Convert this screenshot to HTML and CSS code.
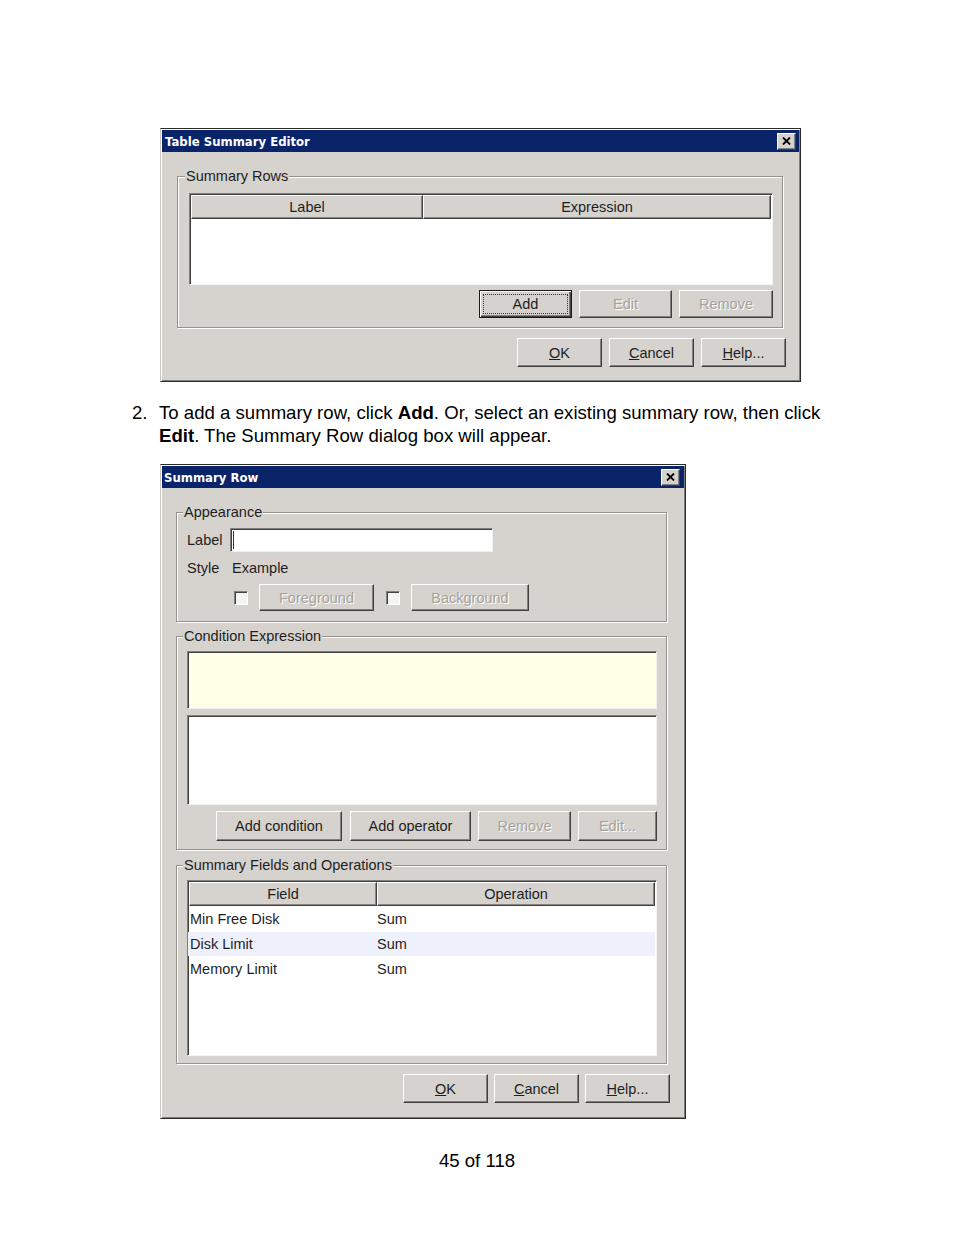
FILE: index.html
```html
<!DOCTYPE html>
<html lang="en">
<head>
    <meta charset="UTF-8">
    <title>Table Summary Editor - Summary Row</title>
    <link rel="stylesheet" href="styles.css">
</head>
<body>
    <div class="page">

        <!-- Table Summary Editor dialog -->
        <div class="dialog dlg-editor">
            <div class="titlebar">
                <span class="title">Table Summary Editor</span>
                <span class="close-btn"><svg width="9" height="8" viewBox="0 0 9 8"><path d="M1 0.5 L8 7.5 M8 0.5 L1 7.5" stroke="#000" stroke-width="1.8"/></svg></span>
            </div>
            <div class="dlg-body">
                <fieldset class="group">
                    <legend>Summary Rows</legend>
                    <div class="grid grid-rows">
                        <div class="grid-head">
                            <div class="th th-label">Label</div>
                            <div class="th th-fill">Expression</div>
                        </div>
                    </div>
                    <div class="btn-row">
                        <button class="btn btn-default btn-93"><span class="focus">Add</span></button>
                        <button class="btn btn-93 is-disabled">Edit</button>
                        <button class="btn btn-94 is-disabled">Remove</button>
                    </div>
                </fieldset>
                <div class="actions">
                    <button class="btn btn-act"><u>O</u>K</button>
                    <button class="btn btn-act"><u>C</u>ancel</button>
                    <button class="btn btn-act"><u>H</u>elp...</button>
                </div>
            </div>
        </div>

        <p class="step">
            <span class="step-num">2.</span>
            <span class="step-text">To add a summary row, click <b>Add</b>. Or, select an existing summary row, then click <b>Edit</b>. The Summary Row dialog box will appear.</span>
        </p>

        <!-- Summary Row dialog -->
        <div class="dialog dlg-row">
            <div class="titlebar">
                <span class="title">Summary Row</span>
                <span class="close-btn"><svg width="9" height="8" viewBox="0 0 9 8"><path d="M1 0.5 L8 7.5 M8 0.5 L1 7.5" stroke="#000" stroke-width="1.8"/></svg></span>
            </div>
            <div class="dlg-body">
                <fieldset class="group grp-tight">
                    <legend>Appearance</legend>
                    <div class="field-row">
                        <span class="field-label">Label</span>
                        <span class="text-input"><span class="caret"></span></span>
                    </div>
                    <div class="style-row">
                        <span class="style-label">Style</span>
                        <span>Example</span>
                    </div>
                    <div class="check-row">
                        <span class="checkbox"></span>
                        <button class="btn btn-fg is-disabled">Foreground</button>
                        <span class="checkbox"></span>
                        <button class="btn btn-bg is-disabled">Background</button>
                    </div>
                </fieldset>

                <fieldset class="group grp-tight grp-cond">
                    <legend>Condition Expression</legend>
                    <div class="well well-yellow"></div>
                    <div class="well well-white"></div>
                    <div class="btn-row btn-row-cond">
                        <button class="btn btn-cond btn-addcond">Add condition</button>
                        <button class="btn btn-cond btn-addop">Add operator</button>
                        <button class="btn btn-cond btn-93 is-disabled">Remove</button>
                        <button class="btn btn-cond btn-edit is-disabled">Edit...</button>
                    </div>
                </fieldset>

                <fieldset class="group grp-tight grp-fields">
                    <legend>Summary Fields and Operations</legend>
                    <div class="grid grid-fields">
                        <div class="grid-head">
                            <div class="th th-field">Field</div>
                            <div class="th th-fill">Operation</div>
                        </div>
                        <div class="tr"><span class="td td-field">Min Free Disk</span><span class="td">Sum</span></div>
                        <div class="tr tr-alt"><span class="td td-field">Disk Limit</span><span class="td">Sum</span></div>
                        <div class="tr"><span class="td td-field">Memory Limit</span><span class="td">Sum</span></div>
                    </div>
                </fieldset>

                <div class="actions">
                    <button class="btn btn-act"><u>O</u>K</button>
                    <button class="btn btn-act"><u>C</u>ancel</button>
                    <button class="btn btn-act"><u>H</u>elp...</button>
                </div>
            </div>
        </div>

        <p class="page-num">45 of 118</p>
    </div>
</body>
</html>
```

FILE: styles.css
```css
body {
    margin: 0;
    padding: 0;
    background-color: #fff;
    font-family: "Liberation Sans", Arial, sans-serif;
    color: #000;
}
.page {
    width: 954px;
    padding-top: 128px;
}

/* dialog frame */
.dialog {
    box-sizing: border-box;
    margin-left: 160px;
    background-color: #d6d3ce;
    border: 1px solid;
    border-color: #2a2a2a #2a2a2a #2a2a2a #c9c6c1;
    padding: 1px;
    box-shadow: inset 1px 1px 0 #fff, inset -1px -1px 0 #808080;
    font-size: 14.5px;
    color: #1e1e1e;
}
.dlg-editor {
    width: 641px;
}
.dlg-row {
    width: 526px;
}
.titlebar {
    height: 22px;
    background-color: #0a246a;
    display: flex;
    align-items: center;
    justify-content: space-between;
    padding: 0 3px 0 3px;
}
.dlg-row .titlebar {
    padding: 0 4px 0 2px;
}
.title {
    font-family: "DejaVu Sans", Verdana, sans-serif;
    font-weight: bold;
    font-size: 11.7px;
    color: #fff;
    padding-top: 1px;
}
.close-btn {
    box-sizing: border-box;
    width: 19px;
    height: 17px;
    background-color: #d6d3ce;
    border: 1px solid;
    border-color: #fff #404040 #404040 #fff;
    box-shadow: inset -1px -1px 0 #808080;
    display: flex;
    align-items: center;
    justify-content: center;
}
.dlg-body {
    padding: 16px 16px 13px 15px;
}
.dlg-row .dlg-body {
    padding: 16px 17px 14px 14px;
}

/* etched group box */
.group {
    margin: 0;
    min-width: 0;
    border: 1px solid #95928d;
    box-shadow: inset 1px 1px 0 #fff, 1px 1px 0 #fff;
    padding: 9px 9px 9px 11px;
}
.group legend {
    margin-left: -4px;
    padding: 1px 1px 0 1px;
    font-size: 14.5px;
    line-height: 15px;
    background-color: #d6d3ce;
}
.grp-tight {
    padding: 8px 9px 10px 10px;
}
.grp-cond {
    margin-top: 6px;
    padding: 7px 9px 8px 10px;
}
.grp-fields {
    margin-top: 7px;
    padding: 7px 9px 7px 10px;
}

/* tables */
.grid {
    box-sizing: border-box;
    background-color: #fff;
    border: 1px solid;
    border-color: #808080 #f4f4f4 #f4f4f4 #808080;
    box-shadow: inset 1px 1px 0 #404040;
    display: flex;
    flex-direction: column;
}
.grid-rows {
    height: 92px;
}
.grid-fields {
    height: 176px;
}
.grid-head {
    display: flex;
    padding: 1px 1px 0 1px;
    height: 24px;
    flex: none;
}
.th {
    box-sizing: border-box;
    height: 24px;
    line-height: 22px;
    text-align: center;
    background-color: #d6d3ce;
    border: 1px solid;
    border-color: #fff #404040 #404040 #fff;
    box-shadow: inset -1px -1px 0 #8a8782;
}
.th-label {
    width: 232px;
}
.th-field {
    width: 188px;
}
.th-fill {
    flex: 1;
}
.tr {
    display: flex;
    align-items: center;
    height: 24px;
    padding-left: 2px;
    margin-top: 1px;
}
.tr-alt {
    background-color: #eef0fc;
    margin-right: 1px;
}
.td-field {
    width: 187px;
}

/* buttons */
.btn {
    box-sizing: border-box;
    height: 28px;
    padding: 0;
    background-color: #d6d3ce;
    border: 1px solid;
    border-color: #fff #404040 #404040 #fff;
    box-shadow: inset -1px -1px 0 #808080;
    font-family: "Liberation Sans", Arial, sans-serif;
    font-size: 14.5px;
    color: #1e1e1e;
}
.btn.is-disabled {
    color: #a5a29d;
    text-shadow: 1px 1px 0 #fff;
}
.btn-default {
    display: flex;
    padding: 3px;
    border-color: #1a1a1a;
    box-shadow: inset 1px 1px 0 #fff, inset -1px -1px 0 #404040, inset -2px -2px 0 #808080;
}
.focus {
    flex: 1;
    display: flex;
    align-items: center;
    justify-content: center;
    border: 1px dotted #333;
}
.btn-93 { width: 93px; }
.btn-94 { width: 94px; }
.btn-row {
    display: flex;
    justify-content: flex-end;
    gap: 7px;
    margin-top: 5px;
}
.actions {
    display: flex;
    justify-content: flex-end;
    gap: 7px;
    margin-top: 10px;
    margin-right: -3px;
}
.dlg-row .actions {
    gap: 6px;
}
.btn-act {
    width: 85px;
    height: 29px;
}

/* summary row form */
.field-row {
    display: flex;
    align-items: center;
    height: 24px;
}
.field-label {
    width: 43px;
}
.text-input {
    box-sizing: border-box;
    width: 263px;
    height: 24px;
    background-color: #fff;
    border: 1px solid;
    border-color: #808080 #f0f0f0 #f0f0f0 #808080;
    box-shadow: inset 1px 1px 0 #404040;
    display: flex;
    align-items: center;
    padding-left: 2px;
}
.caret {
    width: 1px;
    height: 18px;
    background-color: #333;
}
.style-row {
    display: flex;
    height: 20px;
    line-height: 20px;
    margin-top: 6px;
}
.style-label {
    width: 45px;
}
.check-row {
    display: flex;
    align-items: center;
    height: 27px;
    margin-top: 6px;
    padding-left: 47px;
}
.checkbox {
    box-sizing: border-box;
    width: 14px;
    height: 14px;
    background-color: #f4f4f4;
    border: 1px solid;
    border-color: #808080 #fff #fff #808080;
    box-shadow: inset 1px 1px 0 #404040;
}
.btn-fg {
    width: 115px;
    height: 27px;
    margin: 0 12px 0 11px;
}
.btn-bg {
    width: 118px;
    height: 27px;
    margin-left: 11px;
}

/* condition expression */
.well {
    box-sizing: border-box;
    border: 1px solid;
    border-color: #808080 #f0f0f0 #f0f0f0 #808080;
    box-shadow: inset 1px 1px 0 #404040;
}
.well-yellow {
    height: 58px;
    background-color: #fffee6;
}
.well-white {
    height: 90px;
    margin-top: 6px;
    background-color: #fff;
}
.btn-row-cond {
    margin-top: 6px;
}
.btn-cond {
    height: 30px;
}
.btn-addcond {
    width: 126px;
    margin-right: 1px;
}
.btn-addop { width: 121px; }
.btn-edit { width: 79px; }

/* document text */
.step {
    display: flex;
    margin: 19px 0 17px 132px;
    font-size: 18.6px;
    line-height: 23px;
}
.step-num {
    width: 27px;
    flex: none;
}
.step-text {
    width: 690px;
}
.page-num {
    margin: 30px 0 0 0;
    text-align: center;
    font-size: 18.6px;
    line-height: 23px;
}
```
